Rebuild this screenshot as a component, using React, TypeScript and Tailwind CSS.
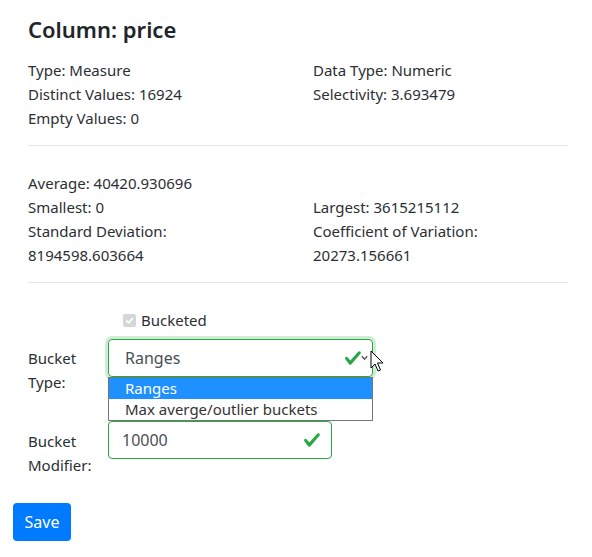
import React from "react";

const Check = ({ className = "" }: { className?: string }) => (
  <svg viewBox="0 0 8 8" className={className} width="18" height="18">
    <path
      fill="#28a745"
      d="M2.3 6.73L.6 4.53c-.4-1.04.46-1.4 1.1-.8l1.1 1.4 3.4-3.8c.6-.63 1.6-.27 1.2.7l-4 4.6c-.43.5-.8.4-1.1.1z"
    />
  </svg>
);

export default function App() {
  return (
    <div className="w-[592px] h-[557px] bg-white text-[#2b2f33] font-['Segoe_UI','Noto_Sans',sans-serif] text-[15px] leading-[24px] pl-[13px] relative overflow-hidden">
      <div className="pl-[15px] w-[555px]">
        <h3 className="text-[22px] leading-[29px] font-semibold pt-[15px] mb-[14px] text-[#212529]">Column: price</h3>
        <div className="grid grid-cols-2 gap-x-[30px] mb-[15px]">
          <div>Type: Measure</div>
          <div>Data Type: Numeric</div>
          <div>Distinct Values: 16924</div>
          <div>Selectivity: 3.693479</div>
          <div>Empty Values: 0</div>
          <div></div>
        </div>
        <hr className="border-t border-[#e5e5e5] w-[540px] mb-[25px]" />
        <div className="grid grid-cols-2 gap-x-[30px] mb-[15px]">
          <div>Average: 40420.930696</div>
          <div></div>
          <div>Smallest: 0</div>
          <div>Largest: 3615215112</div>
          <div>
            Standard Deviation:
            <br />
            8194598.603664
          </div>
          <div>
            Coefficient of Variation:
            <br />
            20273.156661
          </div>
        </div>
        <hr className="border-t border-[#e5e5e5] w-[540px] mb-[25px]" />

        <div className="flex items-center h-[24px] pl-[95px]">
          <span className="w-[13px] h-[13px] rounded-[2px] bg-[#d6d6d6] flex items-center justify-center mr-[5px]">
            <svg viewBox="0 0 12 12" width="11" height="11">
              <path d="M2.5 6.2 L5 8.6 L9.6 3.4" fill="none" stroke="#fff" strokeWidth="1.8" />
            </svg>
          </span>
          <span>Bucketed</span>
        </div>

        <div className="flex mt-[7px]">
          <label className="w-[80px] pt-[7px] leading-[24px]">
            Bucket
            <br />
            Type:
          </label>
          <div className="relative">
            <div className="w-[265px] h-[38px] border border-[#28a745] rounded-[4px] shadow-[0_0_0_3px_rgba(40,167,69,0.22)] flex items-center pl-[16px] text-[#495057] text-[16px]">
              Ranges
              <Check className="absolute left-[236px] top-[10px]" />
              <svg className="absolute left-[253px] top-[16px]" width="7" height="6" viewBox="0 0 7 6">
                <path d="M0.8 1.2 L3.5 4.2 L6.2 1.2" fill="none" stroke="#555" strokeWidth="1.4" />
              </svg>
            </div>
            <div className="absolute left-0 top-[38px] w-[265px] border border-[#767676] bg-white z-10 text-[15px] leading-[21px]">
              <div className="bg-[#1e90ff] text-white pl-[16px]">Ranges</div>
              <div className="pl-[16px] text-[#333]">Max averge/outlier buckets</div>
            </div>
            <svg className="absolute left-[262px] top-[11px] z-20" width="16" height="24" viewBox="0 0 16 24">
              <path
                d="M1 1 L1 18 L5 14 L8 21 L10.5 20 L7.5 13 L13 13 Z"
                fill="#fff"
                stroke="#000"
                strokeWidth="1"
                strokeLinejoin="round"
              />
            </svg>
          </div>
        </div>

        <div className="flex mt-[27px]">
          <label className="w-[80px] pt-[8px] leading-[24px]">
            Bucket
            <br />
            Modifier:
          </label>
          <div className="relative w-[224px] h-[38px] border border-[#28a745] rounded-[4px] flex items-center pl-[13px] text-[#495057] text-[16px]">
            10000
            <Check className="absolute left-[194px] top-[9px]" />
          </div>
        </div>
      </div>
      <button className="mt-[26px] w-[58px] h-[38px] rounded-[4px] bg-[#007bff] text-white text-[16px]">Save</button>
    </div>
  );
}
